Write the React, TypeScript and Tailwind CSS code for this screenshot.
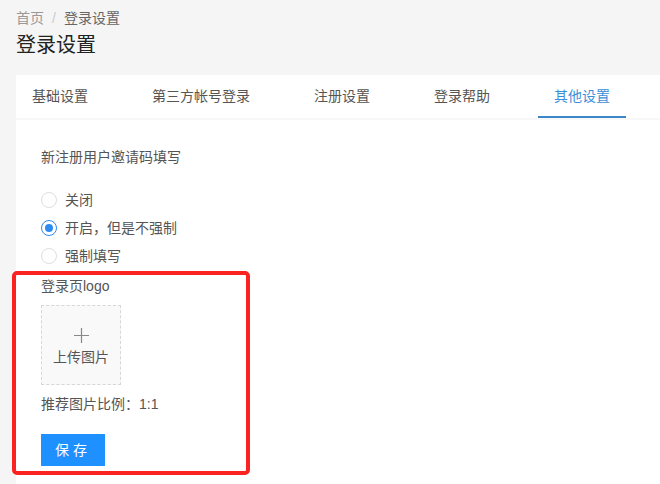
const tabs = ["基础设置", "第三方帐号登录", "注册设置", "登录帮助", "其他设置"];

const radios = [
  { label: "关闭", checked: false },
  { label: "开启，但是不强制", checked: true },
  { label: "强制填写", checked: false },
];

export default function App() {
  return (
    <div className="relative flex h-[484px] w-[660px] flex-col overflow-hidden bg-[#f5f5f5] font-['Liberation_Sans','Noto_Sans_CJK_SC',sans-serif] text-[14px] text-[#555]">
      <div className="px-4">
        <div className="pt-[9px] text-[14px] leading-[18px]">
          <span className="text-[#999]">首页</span>
          <span className="mx-[8px] text-[#ccc]">/</span>
          <span className="text-[#666]">登录设置</span>
        </div>
        <h1 className="mt-[4px] text-[20px] leading-[28px] font-normal text-[#222]">登录设置</h1>
      </div>

      <div className="mt-4 ml-4 flex-1 bg-white">
        <div className="flex h-[45px] gap-8 border-b-2 border-[#f8f8f8]">
          {tabs.map((t, i) => (
            <div
              key={t}
              className={`flex h-full items-center border-b-2 px-4 pt-[2px] ${
                i === 4 ? "border-[#3b87c8] text-[#3b8fd9]" : "border-transparent text-[#555]"
              }`}
            >
              {t}
            </div>
          ))}
        </div>

        <div className="pl-[25px]">
          <div className="pt-[27px] leading-[20px]">新注册用户邀请码填写</div>

          <div className="mt-[19px] flex flex-col">
            {radios.map((r) => (
              <label key={r.label} className="flex h-[28px] items-center gap-2">
                <span
                  className={`flex h-[16px] w-[16px] items-center justify-center rounded-full border bg-white ${
                    r.checked ? "border-[#2d8cf0]" : "border-[#dcdee2]"
                  }`}
                >
                  {r.checked && <span className="h-[8px] w-[8px] rounded-full bg-[#2d8cf0]" />}
                </span>
                <span>{r.label}</span>
              </label>
            ))}
          </div>

          <div className="mt-[6px] leading-[20px]">登录页logo</div>

          <div className="mt-[9px] flex h-[80px] w-[80px] flex-col items-center justify-center border border-dashed border-[#d7d7d7] bg-[#f9f9f9]">
            <svg width="15" height="15" viewBox="0 0 15 15" className="mt-[4px]">
              <path d="M7.5 0v15M0 7.5h15" stroke="#888" strokeWidth="1.2" />
            </svg>
            <span className="mt-[4px] leading-[20px]">上传图片</span>
          </div>

          <div className="mt-[9px] leading-[20px]">推荐图片比例：1:1</div>

          <button className="mt-[20px] h-[32px] w-[64px] bg-[#1e90ff] text-[14px] tracking-[4px] text-white">
            保存
          </button>
        </div>
      </div>

      <div className="absolute top-[271px] left-[12px] h-[204px] w-[238px] rounded-[5px] border-4 border-[#fb2222]" />
    </div>
  );
}
